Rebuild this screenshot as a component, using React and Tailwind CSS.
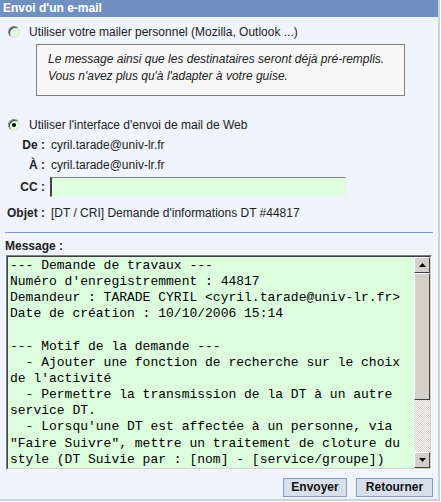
import React from "react";

const MESSAGE = [
  "--- Demande de travaux ---",
  "Numéro d'enregistremment : 44817",
  "Demandeur : TARADE CYRIL <cyril.tarade@univ-lr.fr>",
  "Date de création : 10/10/2006 15:14",
  "",
  "--- Motif de la demande ---",
  "  - Ajouter une fonction de recherche sur le choix",
  "de l'activité",
  "  - Permettre la transmission de la DT à un autre",
  "service DT.",
  "  - Lorsqu'une DT est affectée à un personne, via",
  "\"Faire Suivre\", mettre un traitement de cloture du",
  "style (DT Suivie par : [nom] - [service/groupe])",
];

const Radio = ({ checked }) => (
  <span className="relative w-[12px] h-[12px] rounded-full border border-t-[#808080] border-l-[#808080] border-b-[#e0e0e0] border-r-[#e0e0e0] bg-[#ddffdd] shadow-[inset_1px_1px_0_#404040] flex items-center justify-center shrink-0">
    {checked && <span className="w-[4px] h-[4px] rounded-full bg-black" />}
  </span>
);

const Field = ({ label, children }) => (
  <div className="flex items-center">
    <span className="w-[51px] text-right font-bold pr-[6px] shrink-0">{label}</span>
    {children}
  </div>
);

const Arrow = ({ up }) => (
  <span className="w-[16px] h-[16px] bg-[#d4d0c8] border border-t-white border-l-white border-b-[#404040] border-r-[#404040] flex items-center justify-center shrink-0">
    <svg width="7" height="4" viewBox="0 0 7 4">
      <path d={up ? "M0 4h7L3.5 0z" : "M0 0h7L3.5 4z"} fill="#000" />
    </svg>
  </span>
);

export default function App() {
  return (
    <div
      className="w-[441px] h-[502px] bg-white text-[12px] text-[#222]"
      style={{ fontFamily: '"Liberation Sans", Arial, sans-serif' }}
    >
      <div className="w-[440px] h-[501px] bg-[#eff4fd] border-r-2 border-b-2 border-[#c8d3e3] flex flex-col">
        <div className="h-[17px] bg-[#7090c0] text-white font-bold px-[3px] leading-[17px] shrink-0">
          Envoi d'un e-mail
        </div>

        <div className="flex items-center gap-[9px] pl-[8px] h-[22px] mt-[4px]">
          <Radio />
          <span>Utiliser votre mailer personnel (Mozilla, Outlook ...)</span>
        </div>

        <div className="ml-[36px] w-[369px] h-[52px] mt-[1px] border border-[#808080] bg-[#f7f7f7] italic px-[11px] pt-[6px] leading-[17px]">
          <div>Le message ainsi que les destinataires seront déjà pré-remplis.</div>
          <div>Vous n'avez plus qu'à l'adapter à votre guise.</div>
        </div>

        <div className="flex items-center gap-[9px] pl-[8px] h-[20px] mt-[19px]">
          <Radio checked />
          <span>Utiliser l'interface d'envoi de mail de Web</span>
        </div>

        <div className="flex flex-col">
          <div className="h-[20px] flex items-center">
            <Field label="De :">cyril.tarade@univ-lr.fr</Field>
          </div>
          <div className="h-[19px] flex items-center">
            <Field label="À :">cyril.tarade@univ-lr.fr</Field>
          </div>
          <div className="h-[26px] flex items-center">
            <Field label="CC :">
              <span className="-ml-[1px] w-[296px] h-[20px] bg-[#ddffdd] border border-t-[#808080] border-l-[#404040] border-b-[#f0f0f0] border-r-[#f0f0f0] border-l-2" />
            </Field>
          </div>
          <div className="h-[26px] flex items-center">
            <Field label="Objet :">[DT / CRI] Demande d'informations DT #44817</Field>
          </div>
        </div>

        <div className="mx-[5px] mt-[6px] h-px bg-[#7f9ccc]" />

        <div className="font-bold pl-[5px] mt-[6px] h-[15px] leading-[15px]">Message :</div>

        <div className="ml-[6px] w-[426px] h-[215px] mt-[1px] flex border border-t-[#808080] border-l-[#808080] border-b-white border-r-white">
          <div className="flex-1 flex border border-t-[#404040] border-l-[#404040] border-b-[#d4d0c8] border-r-[#d4d0c8] bg-[#ddffdd]">
            <div
              className="flex-1 pl-[2px] pt-[1px] text-[13px] leading-[16.15px] text-black whitespace-pre overflow-hidden"
              style={{ fontFamily: '"Liberation Mono", "Courier New", monospace' }}
            >
              {MESSAGE.map((line, i) => (
                <div key={i} className="h-[16.15px]">{line}</div>
              ))}
            </div>
            <div className="w-[16px] flex flex-col">
              <Arrow up />
              <span className="h-[127px] bg-[#d4d0c8] border border-t-white border-l-white border-b-[#404040] border-r-[#404040] shrink-0" />
              <span className="flex-1 bg-[repeating-conic-gradient(#d4d0c8_0_25%,#ffffff_0_50%)] bg-[length:2px_2px]" />
              <Arrow />
            </div>
          </div>
        </div>

        <div className="flex justify-end gap-[9px] pr-[5px] mt-[8px]">
          <button className="w-[64px] h-[19px] bg-[#d6dfea] border border-[#7f9ccc] font-bold text-[#111] leading-[17px]">
            Envoyer
          </button>
          <button className="w-[77px] h-[19px] bg-[#d6dfea] border border-[#7f9ccc] font-bold text-[#111] leading-[17px]">
            Retourner
          </button>
        </div>
      </div>
    </div>
  );
}
